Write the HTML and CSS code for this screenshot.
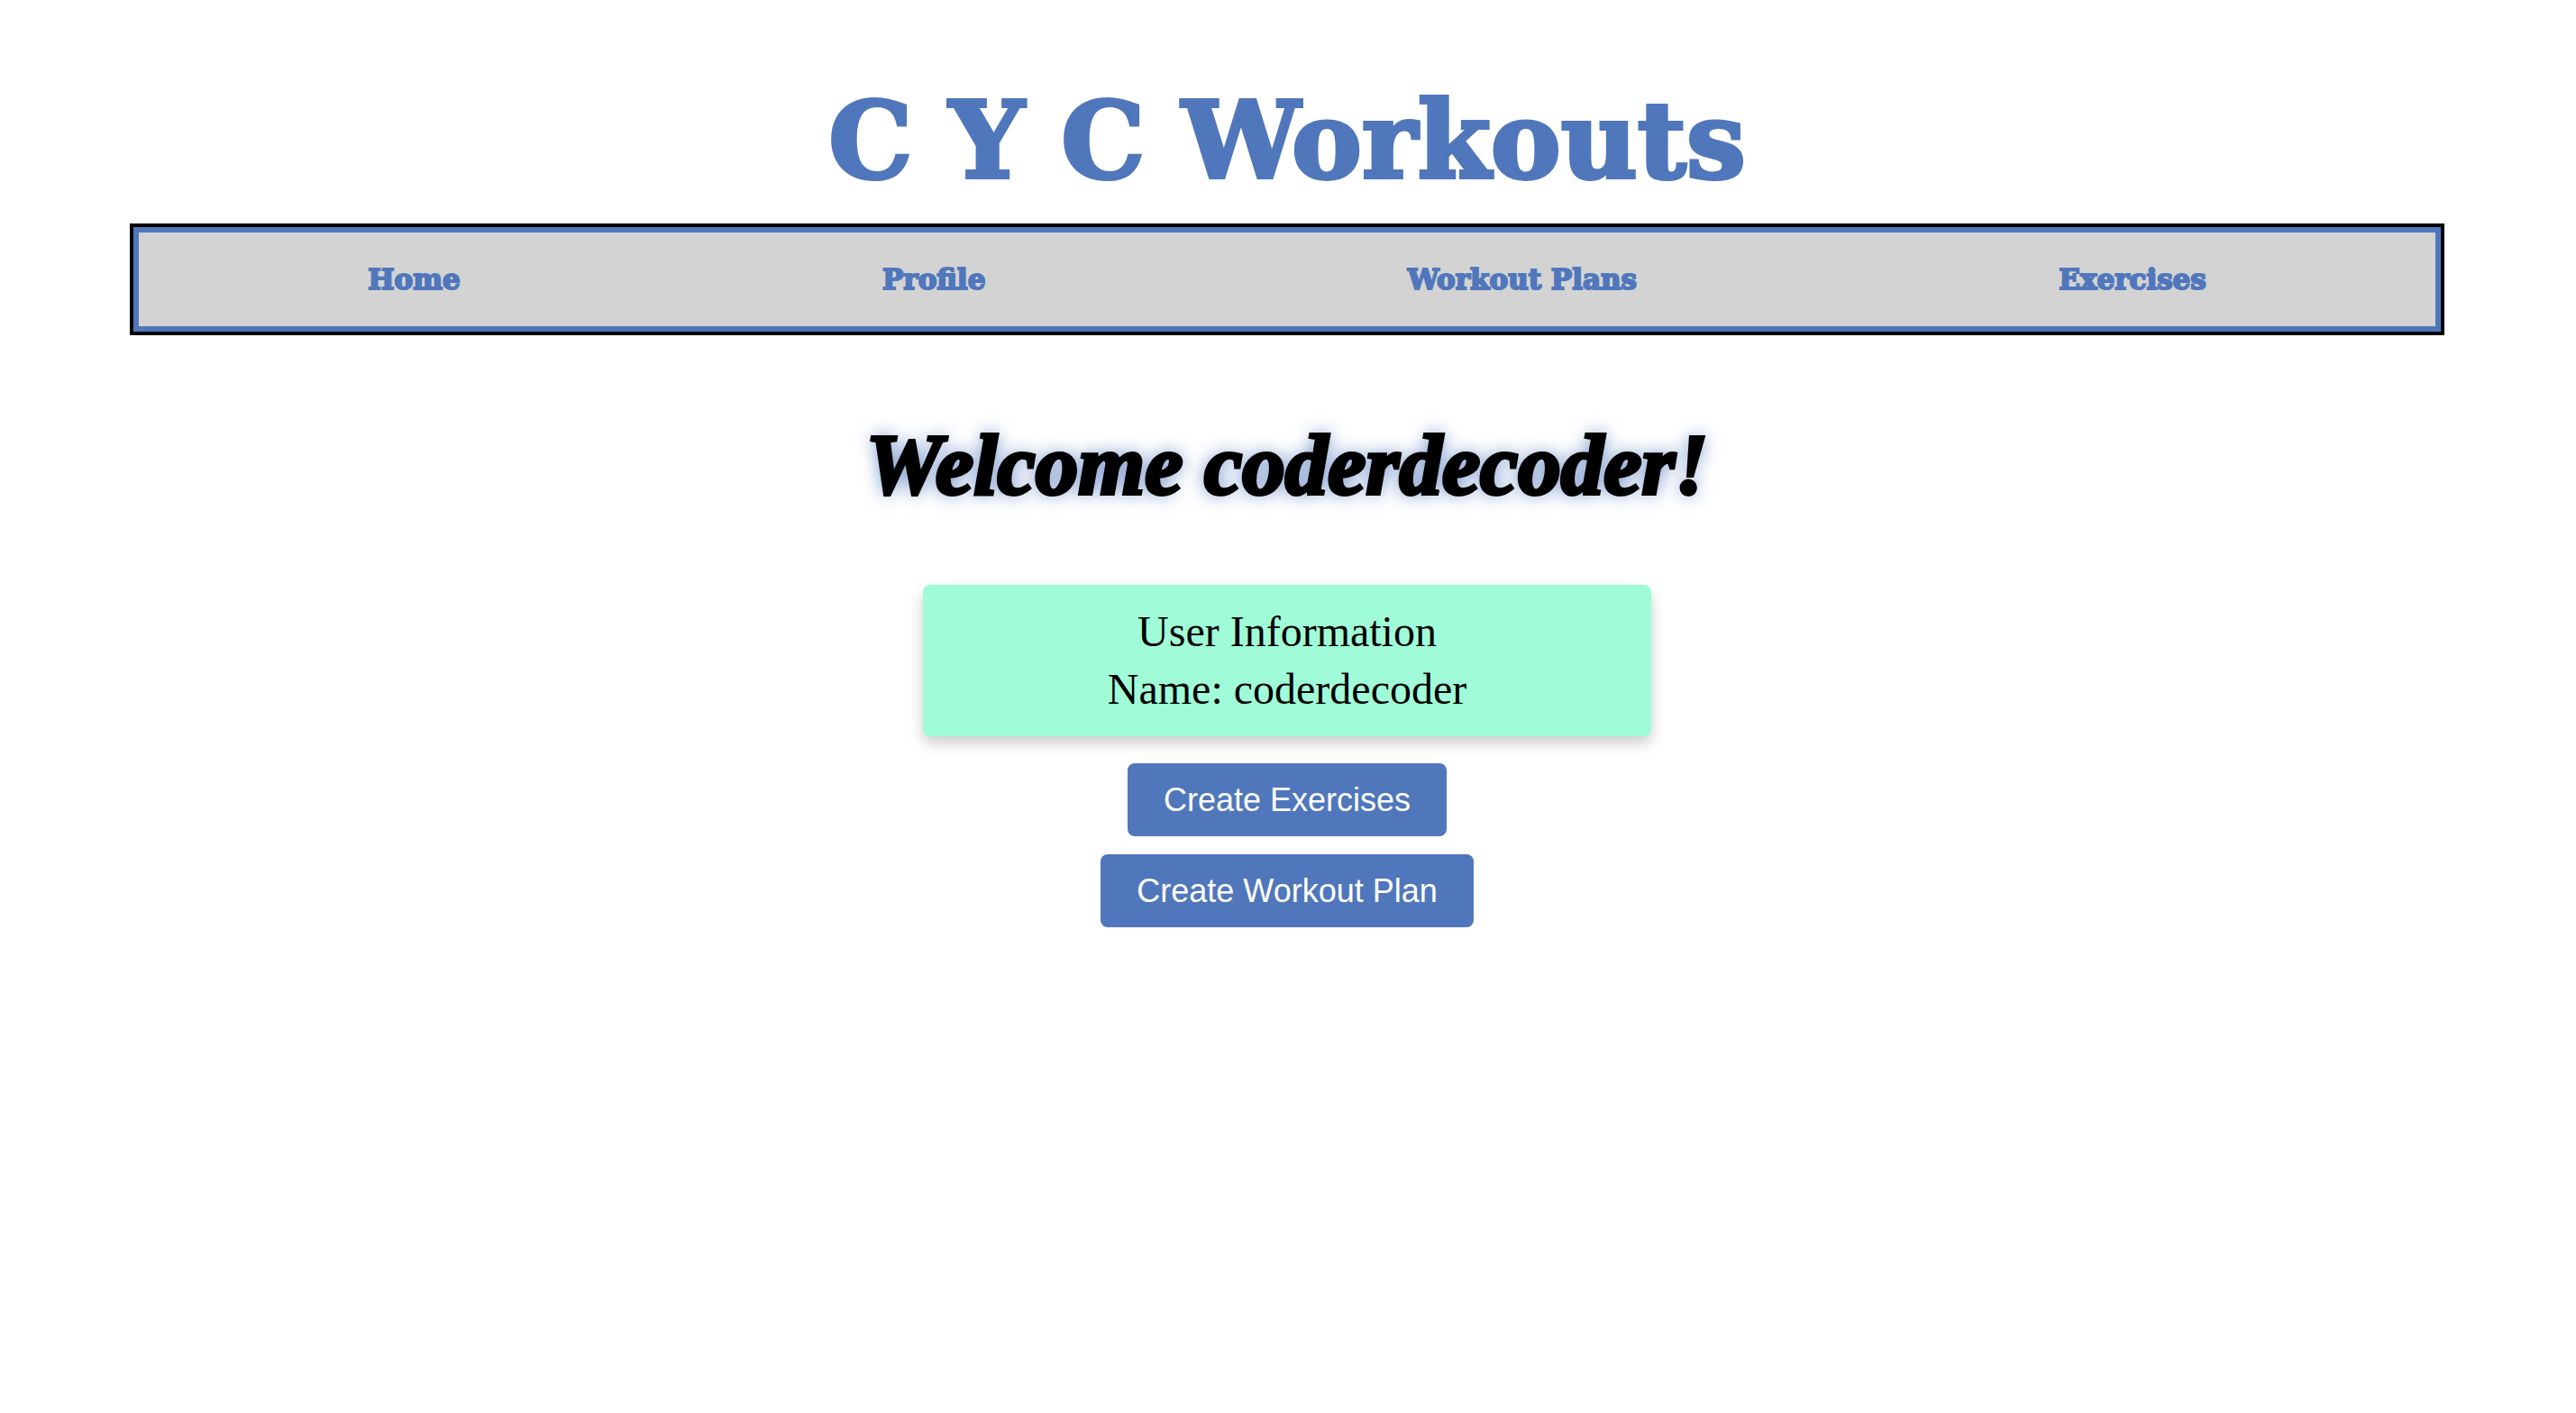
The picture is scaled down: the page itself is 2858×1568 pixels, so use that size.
FILE: index.html
```html
<!DOCTYPE html>
<html lang="en">
<head>
<meta charset="utf-8">
<meta name="viewport" content="width=device-width, initial-scale=1">
<title>C Y C Workouts</title>
<link rel="stylesheet" href="styles.css">
</head>
<body>
<header class="site-header">
  <h1 class="site-title">C Y C Workouts</h1>
  <nav class="site-nav">
    <a class="nav-link" href="#home">Home</a>
    <a class="nav-link" href="#profile">Profile</a>
    <a class="nav-link" href="#plans">Workout Plans</a>
    <a class="nav-link" href="#exercises">Exercises</a>
  </nav>
</header>
<main class="profile">
  <h2 class="welcome">Welcome coderdecoder!</h2>
  <section class="user-card">
    <p class="user-line">User Information</p>
    <p class="user-line">Name: coderdecoder</p>
  </section>
  <div class="actions">
    <button class="button" type="button">Create Exercises</button>
    <button class="button" type="button">Create Workout Plan</button>
  </div>
</main>
</body>
</html>
```
FILE: styles.css
```css
* {
  box-sizing: border-box;
}

body {
  margin: 0;
  padding-right: 2px;
  background: #fff;
  color: #000;
  font-family: "Liberation Serif", "Times New Roman", serif;
}

.site-header {
  padding: 88px 148px 0;
}

.site-title {
  margin: 0;
  color: #5077bb;
  font: bold 117px/136px "DejaVu Serif", serif;
  text-align: center;
  -webkit-text-stroke: 4px #5077bb;
}

.site-nav {
  display: flex;
  justify-content: space-around;
  align-items: center;
  margin-top: 28px;
  padding: 32px 20px;
  border: 6px solid #5077bb;
  outline: 4px solid #000;
  background: #d3d3d3;
}

.nav-link {
  color: #5077bb;
  font: bold 31px/40px "DejaVu Serif", serif;
  text-decoration: none;
  -webkit-text-stroke: 2px #5077bb;
}

.profile {
  display: flex;
  flex-direction: column;
  align-items: center;
  padding-top: 90px;
}

.welcome {
  margin: 0;
  font-size: 95px;
  line-height: 116px;
  font-style: italic;
  font-weight: bold;
  text-shadow: 0 0 20px #5077bb;
  -webkit-text-stroke: 4px #000;
}

.user-card {
  width: 808px;
  max-width: 100%;
  margin-top: 75px;
  padding: 20px;
  border-radius: 8px;
  background: #a0fcd8;
  box-shadow: 0 8px 16px rgba(0, 0, 0, 0.2);
  text-align: center;
}

.user-line {
  margin: 0;
  font-size: 48px;
  line-height: 64px;
}

.actions {
  display: flex;
  flex-direction: column;
  align-items: center;
  gap: 20px;
  margin-top: 30px;
}

.button {
  padding: 20px 40px;
  border: 0;
  border-radius: 8px;
  background: #5077bb;
  color: #fff;
  font: 36px/41px "Liberation Sans", Arial, sans-serif;
}
```
